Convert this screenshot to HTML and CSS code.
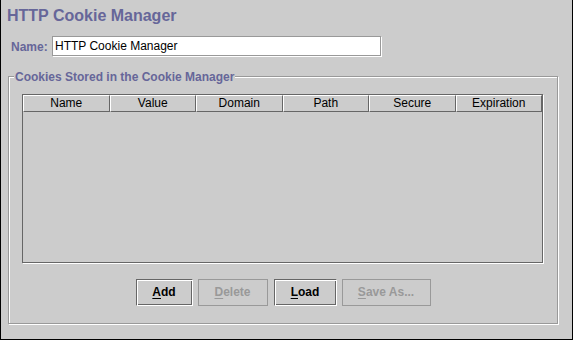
FILE: index.html
```html
<!DOCTYPE html>
<html>
<head>
<meta charset="utf-8">
<link rel="stylesheet" href="styles.css">
</head>
<body>
<div class="frame">
  <div class="title">HTTP Cookie Manager</div>
  <div class="name-row">
    <label class="name-label">Name:</label>
    <div class="field">HTTP Cookie Manager</div>
  </div>
  <div class="group">
    <div class="legend">Cookies Stored in the Cookie Manager</div>
    <div class="scroll">
      <div class="thead">
        <div class="th">Name</div>
        <div class="th">Value</div>
        <div class="th">Domain</div>
        <div class="th">Path</div>
        <div class="th">Secure</div>
        <div class="th">Expiration</div>
      </div>
    </div>
    <div class="buttons">
      <button class="btn btn-add"><u>A</u>dd</button>
      <button class="btn btn-delete disabled"><u>D</u>elete</button>
      <button class="btn btn-load"><u>L</u>oad</button>
      <button class="btn btn-save disabled"><u>S</u>ave As...</button>
    </div>
  </div>
</div>
</body>
</html>
```
FILE: styles.css
```css
html, body {
  margin: 0;
  padding: 0;
  background: #cccccc;
}
.frame {
  box-sizing: border-box;
  width: 573px;
  height: 340px;
  border-left: 1px solid #000;
  border-right: 1px solid #000;
  border-bottom: 1px solid #000;
  padding: 6px 14px 0 7px;
  background: #cccccc;
  font-family: "Liberation Sans", Arial, sans-serif;
  display: flex;
  flex-direction: column;
}
.title {
  margin-left: -1px;
  font-size: 16px;
  font-weight: bold;
  line-height: 19px;
  color: #666699;
}
.name-row {
  margin-top: 11px;
  margin-left: 3px;
  display: flex;
  align-items: center;
  gap: 4px;
}
.name-label {
  width: 37px;
  font-size: 12px;
  font-weight: bold;
  color: #666699;
  line-height: 14px;
}
.field {
  box-sizing: border-box;
  width: 330px;
  height: 21px;
  padding-left: 2px;
  border: 1px solid;
  border-color: #999999 #ffffff #ffffff #999999;
  box-shadow: inset -1px -1px 0 #999999;
  background: #ffffff;
  font-size: 12px;
  line-height: 19px;
  color: #000;
}
.group {
  position: relative;
  margin-top: 19px;
  box-sizing: border-box;
  width: 550px;
  height: 248px;
  border: 1px solid #999999;
  box-shadow: inset 1px 1px 0 #ffffff, 1px 1px 0 #ffffff;
  padding: 17px 14px 0 13px;
  display: flex;
  flex-direction: column;
}
.legend {
  position: absolute;
  left: 5px;
  top: -7px;
  padding: 0 1px;
  background: #cccccc;
  font-size: 12px;
  font-weight: bold;
  line-height: 14px;
  color: #666699;
}
.scroll {
  box-sizing: border-box;
  height: 169px;
  border: 1px solid #666666;
  box-shadow: 1px 1px 0 #ffffff;
  background: #cccccc;
}
.thead {
  display: grid;
  grid-template-columns: repeat(6, 1fr);
}
.th {
  box-sizing: border-box;
  height: 17px;
  border-top: 1px solid #ffffff;
  border-left: 1px solid #ffffff;
  border-right: 1px solid #666666;
  border-bottom: 1px solid #666666;
  text-align: center;
  font-size: 12px;
  line-height: 15px;
  color: #000;
}
.buttons {
  margin-top: 16px;
  margin-left: 1px;
  display: flex;
  justify-content: center;
  gap: 5px;
}
.btn {
  box-sizing: border-box;
  height: 27px;
  margin: 0;
  padding: 0;
  border: 1px solid;
  border-color: #666666 #ffffff #ffffff #666666;
  box-shadow: inset 1px 1px 0 #ffffff, inset -1px -1px 0 #666666;
  background: #cccccc;
  font-family: "Liberation Sans", Arial, sans-serif;
  font-size: 12px;
  font-weight: bold;
  line-height: 25px;
  text-align: center;
  color: #000;
}
.btn-add { width: 57px; }
.btn-delete { width: 70px; margin-right: 1px; }
.btn-load { width: 63px; }
.btn-save { width: 89px; }
.btn u {
  text-underline-offset: 2px;
}
.btn.disabled {
  border: 1px solid #999999;
  box-shadow: none;
  color: #999999;
}
```
